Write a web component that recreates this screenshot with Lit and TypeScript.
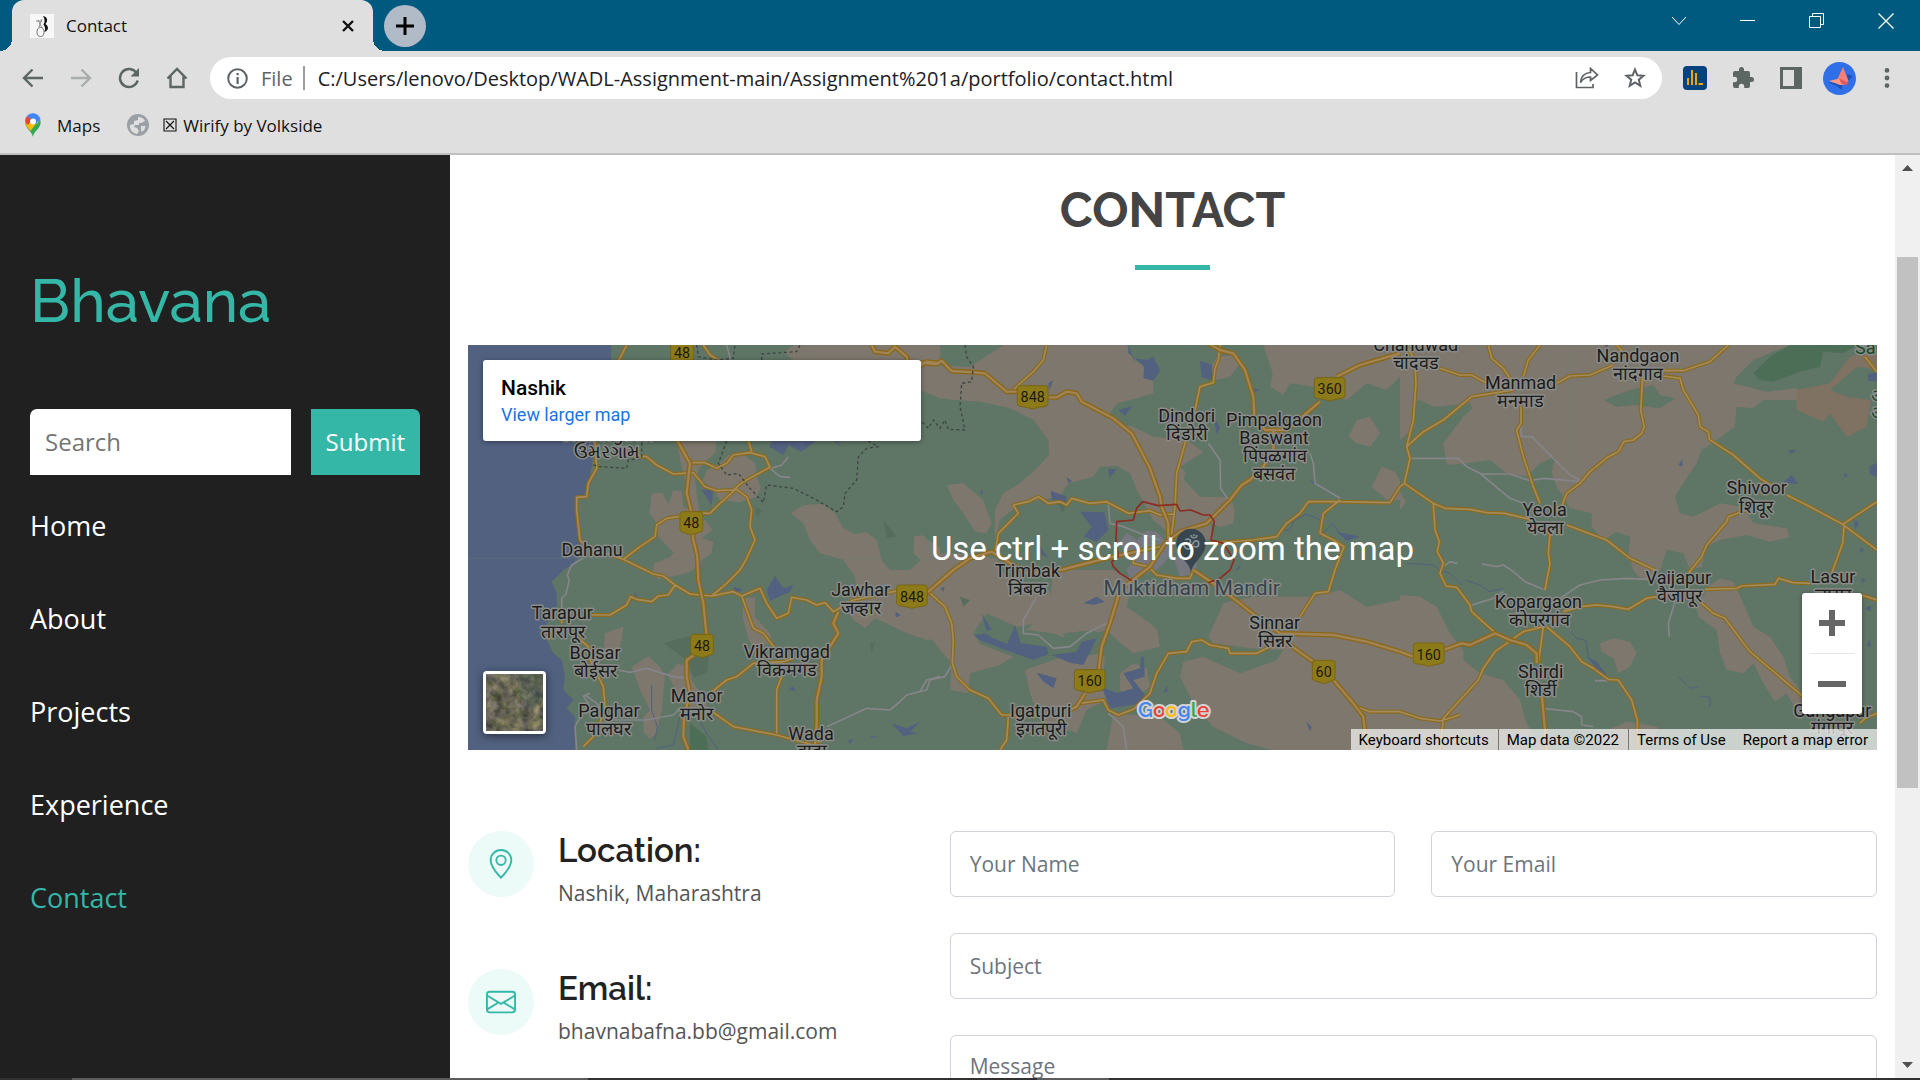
import { LitElement, html, svg, css } from "lit";
import { customElement } from "lit/decorators.js";

/* ---------- Map artwork: three side-by-side tiles, three units to a pixel ---------- */

const TILE_X = [0, 1380, 2820];

const tiles = (name: string, paths: string[]) =>
  paths.map((d, i) => svg`<path class=${name} transform="translate(${TILE_X[i]} 0)" d=${d}></path>`);

const SAND = [
  `M975 40Q990 15 1010 15H1440V180L1420 130L1380 75L1000 60Z
   M650 290H772L765 340L720 380L705 420L718 520H700L660 360Z
   M780 370L805 345L850 342L885 370L890 410L902 440L890 470L840 487L780 480L760 450L728 422L740 390Z
   M575 460L607 458L625 492L640 450L665 455L670 500L700 512L740 545L757 570L725 595L760 605L755 640L725 660L700 690L670 702L595 718L578 700L582 670L630 652L640 638L595 590L590 550L568 520Z
   M992 520L1030 495L1090 492L1125 520L1150 565L1185 582L1220 577L1250 600L1265 660L1290 690L1350 690L1382 660L1360 640L1362 590L1385 585L1440 625V895L1400 900L1340 880L1290 855L1245 835L1215 865L1180 840L1150 790L1190 760L1185 710L1150 660L1080 640L1050 600L1030 550Z
   M435 880L490 860L485 905L465 945L430 950Z
   M515 980L565 948L600 980L615 1010L605 1110L590 1180L570 1197L550 1175V1130L570 1110L540 1050Z
   M850 775L885 770V830L930 880L937 915L870 910L860 880L848 830Z
   M622 1005L655 970L685 980L695 1020L735 1080L745 1105L700 1112L660 1070Z`,
  `M250 15H620L640 60L700 90V160L650 175L590 190L570 220L590 250L640 260L700 290L800 300L868 348L800 380L792 420L840 470L930 472L945 510L940 550L900 562L870 545L880 600L760 590L700 540L650 450L630 400L590 378L540 380L520 410L445 430L420 470L300 490L240 540L225 600V510L250 460L300 430L350 385L387 345L385 300L340 240L270 205L180 185L100 180L60 175L0 150V85L40 75L150 80Z
   M1030 15H1440V110L1400 150L1340 130L1280 180L1180 140L1110 130L1090 165L1050 140L1058 100Z
   M890 50L940 45L957 75L930 110L890 120L870 85Z
   M80 435L130 430L190 480L215 550L200 580L165 575L130 520L100 480Z
   M1385 380L1425 395L1440 420V480L1400 480L1355 440Z
   M1285 290L1310 240L1350 230L1380 280L1350 320L1310 310Z
   M0 600L50 640L120 640L230 655L250 700L330 745L390 752L400 800L350 850L290 860L200 820L160 880L180 912L280 950L240 975L150 1000L145 1060L90 1050L95 970L60 930L30 890L0 880Z
   M400 690L580 690L640 720L620 800L690 850L712 870L720 920L640 940L590 900L560 870L450 900L400 880L320 870L390 800Z
   M315 990L400 960L470 935L520 930L555 950L545 1040L560 1080L500 1110L470 1180L360 1140L330 1060Z
   M580 1120L720 1130L780 1180L790 1230H560Z
   M600 1000L640 970L680 985L690 1040L640 1080L600 1050Z
   M910 790L1000 770L1180 770L1260 750L1340 800L1440 780V1230H1060L980 1210L880 1160L820 1090L780 1010L790 965L850 950L960 1000L1070 960L1090 930L990 925L880 910L865 890Z`,
  `M0 15H1170L1060 60L1010 110L1000 130L1100 155L1190 145L1195 180L1090 180L1060 205L1010 200L1005 260L950 300L905 330L890 370L850 430L825 470L840 520L880 530L960 490L1030 500L1060 550L1160 565L1168 592L1110 605L1040 585L960 600L920 620L905 680L870 690L850 640L800 630L780 690L750 725L720 715L700 690L685 640L690 590L650 575L610 600L575 560V520L510 505L490 470L470 440L455 400L465 350L420 370L380 410L320 400L270 360L200 370L140 375L130 310L190 230L218 205L210 190L100 200L60 180L40 190L45 260L0 300Z
   M0 455L18 485L0 510Z
   M0 765L60 770L110 800L150 880L190 930V960L240 1000L310 1020L360 1080L380 1150L430 1230H0Z
   M600 910L640 895L690 905L710 940L690 980L655 1000L640 955L605 935Z
   M890 800L930 735L960 715L1000 725L1030 790L1060 860L1110 890L1150 950L1170 1010L1200 1050L1250 1120L1200 1130L1160 1060L1125 1085L1090 1030L1060 970L1030 1000L980 990L960 940L950 870L895 830Z
   M600 1180L680 1145L775 1160L750 1230H600Z`,
];

const GREEN = [
  "",
  `M430 880L520 870L560 900L540 940L440 960Z M780 380L830 430L900 450L860 330Z`,
  `M610 180L690 150L760 135L780 165L825 175L780 205L700 195L650 200Z`,
];

const FOREST = [
  `M690 1150L740 1190L745 1230H690Z`,
  "",
  `M1060 100L1110 50L1170 15H1370L1330 40L1270 35L1260 80L1200 95L1120 125L1080 120Z`,
];

const SHADE = [
  `M610 910L680 890L755 900L740 1000L700 1012L680 960Z M885 500L908 512L890 530Z M1270 540L1310 590L1280 595Z M1230 910L1245 905L1235 940Z`,
  `M400 470L440 480L430 520Z M120 770L150 780L130 800Z`,
  ``,
];

const HILLS = [
  "",
  "",
  `M1190 150L1290 130L1350 50L1440 20V90L1371 80L1290 150L1340 170L1412 180L1400 260L1340 290L1290 220L1270 245L1190 210Z`,
];

const WATER = [
  `M725 450L760 448L755 495Z M920 750L945 708L970 745L1000 735L990 755L930 782Z M820 740L848 748L825 765Z
   M1295 1150L1340 1165L1380 1145L1350 1175L1375 1180L1330 1188Z M985 1050L998 1038L1008 1052Z M1306 815L1322 825L1308 832Z
   M935 300H1070L1025 335L985 315L970 345L928 320Z M1115 300L1145 322L1130 300Z M525 755L535 780H522Z
   M1230 1190L1255 1188L1235 1195Z M1165 1200L1180 1198L1170 1212Z`,
  `M625 15L640 55L680 60L700 50L720 90L700 122L670 115L672 80L640 50L625 40Z M840 62L875 75L878 122L845 110Z M595 210L638 198L615 227Z
   M480 515L553 517L565 570L530 605L492 590L515 560Z M392 452L440 470L435 490L396 480Z M565 386L590 388L568 414Z
   M162 885L195 880L220 895L262 912L285 855L302 910L380 920L385 942L340 960L290 942L230 920L180 900Z
   M395 945L470 935L485 905L530 895L490 975L450 968Z M490 790L530 770L555 785L520 794Z M350 998L410 1015L400 1045L370 1025Z
   M610 1000L660 985L663 950H672L674 1010L640 1020L675 1065L655 1092L600 1100L570 1105L545 1040L590 1060L640 1045Z
   M880 230L900 260L890 285Z M1250 575L1320 590L1280 602Z M945 692L965 670L957 688Z M730 1057L742 1035V1055Z
   M1158 1145L1175 1160L1170 1174Z M185 820L215 870L200 872Z M360 620L385 655L365 645Z M385 130L400 120L388 150Z
   M440 412L455 422L446 430Z M180 452L190 455L184 466Z M62 745L74 740L70 755Z M1170 418L1192 432L1180 432Z M1000 145L1020 150L1000 158Z`,
  `M1148 428L1175 405L1195 432Z M835 375L847 358V380Z M1165 330L1190 332L1172 342Z M1403 102L1430 98V124L1405 122Z
   M1408 380L1430 368V412L1410 402Z M1330 408L1338 398L1343 412Z M1362 540L1376 548L1366 572Z M1380 622L1392 630L1382 640Z
   M1395 805L1412 795V815Z M1402 918L1408 895L1413 920Z M1385 712L1397 722L1386 730Z M560 950L590 965L622 1008L590 985Z M612 12L625 15L620 28Z`,
];

const STREAMS = [
  `M575 1035V1110L592 1160L585 1200 M700 1110L740 1180L775 1230 M660 1130L640 1215L590 1225`,
  `M1080 570L1110 570L1120 545L1160 522L1200 540 M1200 590L1235 550L1260 580`,
  `M20 670L100 675L120 690L150 700L185 735 M195 720L240 735L270 755L310 745 M510 875L530 895L558 902L565 950L620 1005 M835 1010L870 1045L895 1040 M898 1068L930 1072V1100`,
];

const LANES = [
  `M370 655L335 675L322 705L328 720L318 762L305 775V815 M475 990L510 997L560 985L640 1010L690 1015
   M375 1065L410 1090L450 1140L560 1140L640 1125L660 1105 M1100 1160L1220 1105L1290 1110L1320 1085L1340 1065L1380 1055L1400 1020L1440 1010
   M350 1230L345 1160L385 1090L370 1068L390 1060 M930 385L960 410L990 412 M935 385L965 375L985 350 M800 15L812 60`,
  `M865 310L900 360L902 445L925 480 M1170 340L1180 370L1185 430L1260 475 M565 490L570 550L610 560L660 580L720 600
   M350 770L310 840V880L355 885L400 925L450 920L500 880L560 850 M0 1055L20 1050L30 1020L75 1010L95 975 M565 1120L610 1160L620 1230`,
  `M35 355H175L200 380L240 400L330 475L370 490 M240 402H330L390 422L430 415L540 425 M363 250V290H395L510 405L540 420
   M130 680L150 665L172 670 M245 672L290 680L310 675L340 695L375 725L435 750 M480 775L540 735L600 720L680 715L740 718
   M215 795L280 775L310 755 M825 785L805 850L808 890 M430 1105L520 1115L545 1130V1155L580 1160 M585 1022H625`,
];

const ROADS = [
  `M500 15L475 65 M405 300L410 385L385 430L380 470L350 472V510L360 600L368 610
   M520 348L560 350L590 375L640 402L700 398L735 440L770 452L820 450L850 425L930 382L915 350L870 338L820 345L800 370L770 385L735 368L690 368
   M865 300L875 335 M690 525L620 535L590 555L585 590L540 620L490 658L440 640
   M490 658L580 702L610 708L645 735L690 762L755 768L820 755L845 768L900 745L920 790L950 835L985 820L995 772L1040 780L1070 795L1095 788L1120 815L1180 780L1300 755L1345 745
   M645 735L625 765L595 768L575 785L530 778L512 770L500 795L450 825L395 825
   M755 768L800 730L840 690L860 655L885 600L870 560L875 510L860 470L828 447L780 490L750 520L700 518
   M845 768L880 865L910 880L945 925 M750 1060L800 1020L830 1010L880 970L970 965L1000 955
   M965 1010L950 1050V1180 M750 1110L820 1160L950 1185L1060 1215L1085 1200
   M350 890L385 920L390 960L430 1040L435 1100L410 1180L370 1220
   M730 15L750 45L775 60 M305 820V850`,
  `M380 15L370 60L340 95L300 130L275 155
   M900 15L895 60L885 85L880 128L840 140L825 210L795 310L770 400L765 500L755 580L740 600
   M225 640L235 580L265 550L295 520L280 495L325 485L355 470L385 490L420 485L440 495L455 475L510 490L560 485L625 520L690 512L720 525L760 522
   M25 755L75 800L95 850L100 900L97 970L110 1010L150 1050L205 1075L245 1125H360 M265 1130L260 1200L240 1230
   M640 650V670L685 680L710 705L770 715H810L820 690
   M870 610L1000 600L1070 590L1100 550L1140 520L1165 485H1260L1410 488L1440 440
   M1260 480L1210 520L1200 580L1240 600L1272 620L1245 690L1225 755L1185 760L1140 830
   M1310 1100L1350 1115H1440
   M480 1090L550 1080L565 1110L595 1125L640 1108L690 1060L710 1000L745 940L800 935L815 905L845 900L870 915L925 925L930 940H1010L1060 915`,
  `M20 320L70 275L130 240L215 170L340 150 M120 85L180 105H215L260 130 M470 130L510 108L570 105L640 75
   M265 15L275 55L310 85L340 130 M420 15L385 60L370 110 M650 15L690 60
   M985 15L930 65L850 92H790 M790 108L840 115L850 150L895 225L900 260L925 275L928 298L1000 345L1080 415L1120 440
   M728 110L722 210L733 260L725 280L700 300L672 305L655 335L625 350L570 395L540 430L500 460L485 500
   M363 200V250L350 270L370 350L400 440L420 490 M20 20L45 60L48 130L40 240L20 320L30 355L13 430L0 440
   M100 490L105 570L118 605L112 635L130 670L120 700L138 738L170 742L210 795L215 815L285 878
   M430 860L370 875L285 935L250 985L235 1020L130 1135L120 1230 M0 1115L60 1135L120 1143L180 1125
   M430 860L415 970 M450 580L445 640L450 670L435 750 M500 555L620 600L690 655L765 690
   M440 860L510 920L545 965L580 985L625 1018L655 1020L695 1080L712 1140V1230
   M490 815L540 800L590 795L640 800L685 808L740 775L770 770
   M915 748L1010 745L1025 738L1125 733L1135 715L1180 728L1230 730 M865 700L905 650L920 615L980 545L985 530L1040 510
   M13 430L100 490L135 505L210 508L260 518L315 520L400 540 M1160 465L1220 495L1328 553L1431 630 M1328 553L1431 485 M1332 560L1328 610L1295 700
   M900 785L940 820L975 835L1050 935L1210 1070 M1380 1150L1395 1135L1431 1120 M1385 765L1431 780 M1395 50L1430 95`,
];

const HIGHWAYS = [
  `M640 280L690 370L680 460L695 520L700 600L712 650L715 720L730 790L740 890L725 930L680 960V1010L690 1060L672 1130L670 1190L685 1230
   M1135 815L1120 850L1135 880L1110 920L1085 960V1010L1070 1080V1150L1065 1215
   M1235 15L1245 35L1285 40L1305 20L1340 50L1345 70L1380 78L1400 65L1440 70`,
  `M0 68L50 72L65 62L95 93L165 97L195 100L260 155H300 M385 172H410L440 155L470 160L485 185L580 235L635 280L690 385L720 470L725 500L745 550V595
   M865 10L900 30L940 40L975 90L1000 170L1003 230L1035 270L1100 270L1200 185 M1250 110L1320 75L1440 40
   M1060 270V330L1030 380L990 420L965 435L930 480L860 550L780 575L735 610L690 680L600 750L570 850L545 920L535 1000 M495 1060L470 1100L450 1110
   M25 755L100 690L150 655L215 635L320 700 M320 700L430 688L480 675L580 650L720 620
   M820 690L880 730L960 790L1010 830L1080 880 M1080 880L1240 885L1340 905L1440 935 M1110 915L1180 965 M1240 1020L1300 1090L1330 1130L1340 1230
   M0 790L25 755`,
  `M0 935L40 950 M130 930L185 910L210 915L285 880L330 900L380 915L410 940V970 M425 1060L435 1170L440 1230`,
];

const BORDERS = [
  `M400 375L420 380L500 385L505 360L545 355V305 M800 303L775 370L800 405L835 400L870 445L910 488L920 435L1000 445L1060 475L1130 515L1150 500L1155 460L1190 420L1195 350L1220 325L1255 320L1225 303
   M710 15L715 50L770 60L820 55L825 15 M905 60V42L1010 35L1020 15`,
  `M135 15L140 50L160 80L155 125L125 130L120 200L135 270L85 268L75 240L60 265L40 240L25 265L0 240`,
  "",
];

const LABELS: [number, number, string, string?][] = [
  [440, 302, "Umbergaon"], [440, 354, "ઉમરગામ"],
  [396, 647, "Dahanu"], [307, 838, "Tarapur"], [310, 893, "तारापूर"], [405, 957, "Boisar"], [405, 1010, "बोईसर"],
  [447, 1130, "Palghar"], [446, 1184, "पालघर"], [710, 1087, "Manor"], [710, 1140, "मनोर"],
  [980, 955, "Vikramgad"], [982, 1008, "विक्रमगड"], [1202, 768, "Jawhar"], [1203, 822, "जव्हार"],
  [1053, 1200, "Wada"], [1055, 1252, "वाडा"],
  [1702, 710, "Trimbak"], [1702, 766, "त्रिंबक"], [2180, 247, "Dindori"], [2180, 300, "दिंडोरी"],
  [2442, 258, "Pimpalgaon"], [2442, 312, "Baswant"], [2444, 366, "पिंपळगांव"], [2442, 421, "बसवंत"],
  [2444, 868, "Sinnar"], [2444, 921, "सिन्नर"], [1742, 1132, "Igatpuri"], [1744, 1186, "इगतपूरी"],
  [2867, 34, "Chandwad"], [2867, 87, "चांदवड"], [3182, 148, "Manmad"], [3182, 201, "मनमाड"],
  [3534, 67, "Nandgaon"], [3535, 121, "नांदगाव"], [3254, 528, "Yeola"], [3255, 581, "येवला"],
  [3890, 463, "Shivoor"], [3889, 519, "शिवूर"], [3655, 731, "Vaijapur"], [3657, 785, "वैजापूर"],
  [3235, 804, "Kopargaon"], [3239, 858, "कोपरगांव"], [3242, 1013, "Shirdi"], [3242, 1067, "शिर्डी"],
  [4119, 729, "Lasur"], [4119, 783, "लासूर"], [4117, 1131, "Gangapur"], [4117, 1183, "गंगापूर"],
  [4216, 42, "Sa", "park"], [4254, 187, "अ", "park"], [4254, 236, "अ", "park"],
  [2195, 764, "Muktidham Mandir", "poi"],
];

const SHIELDS: [number, number, string][] = [
  [666, 38, "48"], [694, 550, "48"], [726, 918, "48"], [1356, 770, "848"], [1718, 172, "848"],
  [2609, 148, "360"], [1889, 1024, "160"], [2591, 996, "60"], [2906, 944, "160"],
];

const shield = ([x, y, n]: [number, number, string]) => {
  const w = n.length > 2 ? 46 : 34;
  return svg`<g transform="translate(${x} ${y})">
    <path class="shield" d="M${-w + 8} -35H${w - 8}Q${w} -35 ${w} -27V18Q${w} 25 ${w - 9} 27Q14 30 0 35Q-14 30 ${-w + 9} 27Q${-w} 25 ${-w} 18V-27Q${-w} -35 ${-w + 8} -35Z"></path>
    <text class="num" y="15">${n}</text></g>`;
};

@customElement("region-map")
class RegionMap extends LitElement {
  static styles = css`
    :host { display: block; position: relative; height: 405px; overflow: hidden; background: #5f7566; font-family: Roboto, "Liberation Sans", sans-serif; }
    .art { display: block; width: 100%; height: 100%; }
    .sea, .water { fill: #51617f; }
    .sand { fill: #7d776d; }
    .green { fill: #5f7566; }
    .forest { fill: #4d6e56; }
    .shade { fill: #566d5e; }
    .hills { fill: #7f7262; }
    .city { fill: #777780; }
    .stream, .lane, .case, .line, .hcase, .hline, .border, .limit { fill: none; stroke-linejoin: round; }
    .stream { stroke: #51617f; stroke-width: 3; }
    .lane { stroke: #85858a; stroke-width: 5; }
    .case { stroke: #8c6a1c; stroke-width: 12; }
    .line { stroke: #a28b5c; stroke-width: 5; }
    .hcase { stroke: #8c6717; stroke-width: 15; }
    .hline { stroke: #a08455; stroke-width: 7; }
    .border { stroke: #3e4644; stroke-width: 4; stroke-dasharray: 9 8; }
    .limit { stroke: #8c2c23; stroke-width: 5; }
    .grid { stroke: #6c7f78; stroke-width: 2; opacity: 0.5; }
    .label { font-size: 54px; text-anchor: middle; fill: #1b1b1b; stroke: #8a8c88; stroke-width: 9; stroke-linejoin: round; paint-order: stroke; }
    .poi { font-size: 63px; fill: #36434d; }
    .park { fill: #174a2a; }
    .shield { fill: #8d7a18; stroke: #7a6611; stroke-width: 3; }
    .num { font-size: 43px; text-anchor: middle; fill: #1c1a10; }
    .pin { fill: #37464f; }
    .om { font-size: 60px; text-anchor: middle; fill: #8b969b; }
    .logo { font: 600 62px Raleway, Lato, sans-serif; text-anchor: middle; stroke: #d3d3d3; stroke-width: 12; stroke-linejoin: round; paint-order: stroke; }
    .b { fill: #4285f4; } .r { fill: #ea4335; } .y { fill: #fbbc05; } .g { fill: #34a853; }
    .hint { position: absolute; inset: 0; display: flex; align-items: center; justify-content: center; margin: 0; padding-top: 2px; font-size: 33px; line-height: 40px; color: #fff; text-align: center; }
    .place { position: absolute; top: 15px; left: 15px; width: 438px; height: 81px; box-sizing: border-box; padding: 15px 18px; background: #fff; border-radius: 3px; box-shadow: 0 1px 5px rgba(0, 0, 0, 0.4); }
    .name { font-size: 21px; line-height: 27px; font-weight: 500; color: #000; }
    .more { display: block; font-size: 18px; line-height: 25px; color: #1a73e8; text-decoration: none; }
    .sat { position: absolute; left: 15px; bottom: 16px; width: 63px; height: 63px; padding: 0; border: 3px solid #fff; border-radius: 4px; overflow: hidden; background: #6a6a54; box-shadow: 0 2px 8px rgba(0, 0, 0, 0.5); }
    .sat svg { display: block; width: 57px; height: 57px; }
    .zoom { position: absolute; right: 15px; bottom: 36px; width: 60px; height: 121px; background: #fff; border-radius: 3px; display: flex; flex-direction: column; align-items: center; box-shadow: 0 1px 4px rgba(0, 0, 0, 0.4); }
    .zoom button { flex: 1; width: 60px; padding: 0; border: 0; background: none; }
    .zoom svg { display: block; margin: auto; }
    .rule { width: 45px; height: 1px; background: #e6e6e6; }
    .credits { position: absolute; right: 0; bottom: 0; display: flex; height: 21px; font-size: 15px; line-height: 22px; color: #000; }
    .credits > * { padding: 0 9px 0 8px; background: rgba(245, 245, 245, 0.72); color: #000; text-decoration: none; border: 0; font: inherit; white-space: nowrap; }
    .keys, .data { margin-right: 1px; }
  `;

  render() {
    return html`
      <svg class="art" viewBox="24 15 4227 1215" preserveAspectRatio="xMidYMid slice" role="img" aria-label="Map of Nashik">
        <path class="sea" d="M-1000 -500H453V60L420 200L405 300L395 380L380 460L345 480L350 560L368 640L335 675L310 690L275 725L290 760V800L265 840L250 880L280 940L305 960L315 1010L310 1050L340 1080L320 1105L345 1130V1180L355 1800H-1000Z"></path>
        ${tiles("sand", SAND)} ${tiles("green", GREEN)} ${tiles("forest", FOREST)} ${tiles("shade", SHADE)} ${tiles("hills", HILLS)}
        <path class="city" d="M1975 610L2000 578L2030 600L2060 572L2090 575L2120 605L2130 650L2090 690L2010 715L2000 690L2020 660Z M2140 650H2210V700L2160 710Z"></path>
        ${tiles("water", WATER)} ${tiles("stream", STREAMS)} ${tiles("lane", LANES)}
        <path class="grid" d="M24 656H4251M1028 15V1230M2180 15V1230M3332 15V1230"></path>
        ${tiles("case", ROADS)} ${tiles("line", ROADS)} ${tiles("hcase", HIGHWAYS)} ${tiles("hline", HIGHWAYS)}
        ${tiles("border", BORDERS)}
        <path class="limit" transform="translate(1380 0)" d="M635 722L600 700L580 680L575 665L595 650L588 600L590 545L640 540L650 505L668 485L715 497L770 493L780 513L812 510L850 525L870 525L883 545L873 600L910 610L942 660L930 690L900 715L865 728"></path>
        <path class="pin" d="M2193 698C2190 665 2149 650 2149 610A44 44 0 0 1 2237 610C2237 650 2197 665 2193 698Z"></path>
        <text class="om" x="2193" y="634">ॐ</text>
        ${LABELS.map(([x, y, t, k]) => svg`<text class="label ${k ?? ""}" x=${x} y=${y}>${t}</text>`)}
        ${SHIELDS.map(shield)}
        <text class="logo" x="2141" y="1131"><tspan class="b">G</tspan><tspan class="r">o</tspan><tspan class="y">o</tspan><tspan class="b">g</tspan><tspan class="g">l</tspan><tspan class="r">e</tspan></text>
      </svg>
      <p class="hint">Use ctrl + scroll to zoom the map</p>
      <div class="place">
        <div class="name">Nashik</div>
        <a class="more" href="#map">View larger map</a>
      </div>
      <button class="sat" aria-label="Show satellite imagery">
        <svg viewBox="0 0 57 57">
          <filter id="terrain" x="0" y="0" width="1" height="1" color-interpolation-filters="sRGB">
            <feTurbulence type="fractalNoise" baseFrequency="0.11" numOctaves="4" seed="7"></feTurbulence>
            <feColorMatrix values="0.5 0.3 0 0 0.01  0.4 0.3 0 0 0.05  0.4 0.1 0.1 0 0.03  0 0 0 0 1"></feColorMatrix>
          </filter>
          <rect width="57" height="57" fill="#696753"></rect>
          <rect width="57" height="57" filter="url(#terrain)"></rect>
          <path fill="#3f5a50" opacity="0.3" d="M30 0H57V28L44 36L34 24Z"></path>
        </svg>
      </button>
      <div class="zoom">
        <button aria-label="Zoom in"><svg width="28" height="28"><path fill="#666" d="M11 1h6v10h10v6H17v10h-6V17H1v-6h10z"></path></svg></button>
        <div class="rule"></div>
        <button aria-label="Zoom out"><svg width="28" height="28"><path fill="#666" d="M0 11h28v6H0z"></path></svg></button>
      </div>
      <div class="credits">
        <button class="keys">Keyboard shortcuts</button><span class="data">Map data ©2022</span><a href="#terms">Terms of Use</a><a href="#report">Report a map error</a>
      </div>
    `;
  }
}

@customElement("browser-chrome")
class BrowserChrome extends LitElement {
  static styles = css`
    :host { display: block; background: #dfdfdf; border-bottom: 2px solid #bfbfbf; font-family: "Open Sans", "Noto Sans", sans-serif; color: #111; }
    button { padding: 0; border: 0; background: none; display: flex; align-items: center; justify-content: center; }
    svg { display: block; }
    .tabs { display: flex; height: 51px; background: #005a80; padding-left: 12px; }
    .tab { position: relative; display: flex; align-items: center; width: 361px; box-sizing: border-box; padding: 0 13px 0 18px; background: #dfdfdf; border-radius: 12px 12px 0 0; font-size: 17px; }
    .tab::before, .tab::after { content: ""; position: absolute; bottom: 0; width: 12px; height: 12px; }
    .tab::before { right: 100%; background: radial-gradient(circle at 0 0, transparent 12px, #dfdfdf 12px); }
    .tab::after { left: 100%; background: radial-gradient(circle at 100% 0, transparent 12px, #dfdfdf 12px); }
    .title { flex: 1; margin-left: 12px; }
    .close { width: 24px; height: 24px; }
    .plus { align-self: center; width: 42px; height: 42px; margin-left: 11px; border-radius: 50%; background: #b0bbc7; }
    .window { display: flex; margin-left: auto; height: 42px; }
    .window button { width: 69px; }
    .bar { display: flex; align-items: center; height: 54px; padding: 0 9px; }
    .bar button { width: 48px; height: 42px; }
    .omni { flex: 1; display: flex; align-items: center; height: 42px; margin: 0 9px; padding: 0 3px 0 17px; border-radius: 21px; background: #fff; font-size: 20px; color: #5f6368; }
    .file { margin-left: 13px; }
    .sep { width: 2px; height: 24px; margin: 0 13px 0 10px; background: #9a9da1; }
    .url { flex: 1; min-width: 0; border: 0; padding: 0; outline: 0; background: none; font: inherit; color: #202124; }
    .marks { display: flex; align-items: center; height: 48px; padding: 0 23px 8px; box-sizing: border-box; font-size: 17px; }
    .marks a { display: flex; align-items: center; color: #111; text-decoration: none; margin-right: 27px; }
    .icon { margin-right: 14px; }
    .box { margin-right: 6px; }
  `;

  render() {
    return html`
      <div class="tabs">
        <div class="tab">
          <svg width="24" height="24" viewBox="0 0 24 24"><rect width="24" height="24" fill="#f7f7f7"></rect><path d="M13 2C18 3 18 7 15.500 10C19 12 19 17 14 18C16 15 15 13 13.500 10.500C15 8 15 5 13 2Z" fill="#111"></path><ellipse cx="10.500" cy="18" rx="3.500" ry="4.500" fill="none" stroke="#777"></ellipse><path d="M6 7H12M8 6L12 14M12 5L9 13" stroke="#888" fill="none"></path></svg>
          <span class="title">Contact</span>
          <button class="close" aria-label="Close tab"><svg width="14" height="14" viewBox="0 0 14 14"><path d="M2 2L12 12M12 2L2 12" stroke="#111" stroke-width="2.400"></path></svg></button>
        </div>
        <button class="plus" aria-label="New tab"><svg width="18" height="18" viewBox="0 0 18 18"><path d="M9 0V18M0 9H18" stroke="#000" stroke-width="3"></path></svg></button>
        <div class="window">
          <button aria-label="Search tabs"><svg width="16" height="10" viewBox="0 0 16 10"><path d="M1 1L8 8.500L15 1" fill="none" stroke="#fff"></path></svg></button>
          <button aria-label="Minimize"><svg width="16" height="2"><path fill="#fff" d="M0 0h15v1H0z"></path></svg></button>
          <button aria-label="Restore"><svg width="16" height="16" viewBox="0 0 16 16"><path d="M.5 3.500H11.500V14.500H.5ZM3.500 3.500V.5H14.500V11.500H11.500" fill="none" stroke="#fff"></path></svg></button>
          <button aria-label="Close"><svg width="16" height="16" viewBox="0 0 16 16"><path d="M.5 .5L15.500 15.500M15.500 .5L.5 15.500" stroke="#fff" stroke-width="1.300"></path></svg></button>
        </div>
      </div>
      <div class="bar">
        <button aria-label="Back"><svg width="22" height="20" viewBox="0 0 22 20"><path d="M21 10H2.500M10.500 1.500L2 10L10.500 18.500" fill="none" stroke="#5c6663" stroke-width="2.400"></path></svg></button>
        <button aria-label="Forward"><svg width="22" height="20" viewBox="0 0 22 20"><path d="M1 10H19.500M11.500 1.500L20 10L11.500 18.500" fill="none" stroke="#a9adab" stroke-width="2.400"></path></svg></button>
        <button aria-label="Reload"><svg width="22" height="22" viewBox="0 0 22 22"><path d="M18.500 6A9 9 0 1 0 19.700 13.500" fill="none" stroke="#5c6663" stroke-width="2.500"></path><path fill="#5c6663" d="M21 1V9.500H12.500Z"></path></svg></button>
        <button aria-label="Home"><svg width="22" height="22" viewBox="0 0 22 22"><path d="M1.500 11.500L11 2L20.500 11.500M4.500 9V20H17.500V9" fill="none" stroke="#5c6663" stroke-width="2.400"></path></svg></button>
        <div class="omni">
          <svg width="21" height="21" viewBox="0 0 21 21"><circle cx="10.500" cy="10.500" r="9.300" fill="none" stroke="#5f6368" stroke-width="2"></circle><path fill="#5f6368" d="M9.500 5h2.200v2.200H9.500zM9.500 9h2.200v7H9.500z"></path></svg>
          <span class="file">File</span><span class="sep"></span>
          <input class="url" aria-label="Address" value="C:/Users/lenovo/Desktop/WADL-Assignment-main/Assignment%201a/portfolio/contact.html">
          <button aria-label="Share"><svg width="24" height="22" viewBox="0 0 24 22"><path d="M1.500 5V20.500H18V17M5.500 15.500C6 9 10 6 15.500 5.500V1.500L22.500 8L15.500 13.500V10C11.500 10 8 11.500 5.500 15.500Z" fill="none" stroke="#5f6368" stroke-width="1.700"></path></svg></button>
          <button aria-label="Bookmark this page"><svg width="22" height="22" viewBox="0 0 22 22"><path d="M11 2.500L13.300 8.200L19.500 8.700L14.800 12.700L16.300 18.800L11 15.500L5.700 18.800L7.200 12.700L2.500 8.700L8.700 8.200Z" fill="none" stroke="#5f6368" stroke-width="2"></path></svg></button>
        </div>
        <button aria-label="Analytics extension"><svg width="24" height="24" viewBox="0 0 24 24"><rect width="24" height="24" rx="4" fill="#05427e"></rect><path fill="#f5a10a" d="M4 12h2v7H4zM8 4h2v15H8zM12 7h2v12H12zM15.500 17H20v2h-4.500z"></path></svg></button>
        <button aria-label="Extensions"><svg width="24" height="24" viewBox="0 0 24 24"><path fill="#5c6663" d="M20.500 11H19V7a2 2 0 0 0-2-2h-4V3.500a2.500 2.500 0 0 0-5 0V5H4a2 2 0 0 0-2 2v3.800h1.500a2.700 2.700 0 0 1 0 5.400H2V20a2 2 0 0 0 2 2h3.800v-1.500a2.700 2.700 0 0 1 5.400 0V22H17a2 2 0 0 0 2-2v-4h1.500a2.500 2.500 0 0 0 0-5z"></path></svg></button>
        <button aria-label="Side panel"><svg width="22" height="22" viewBox="0 0 22 22"><path fill="#5c6663" fill-rule="evenodd" d="M0 0h22v22H0zM3 3v16h11V3z"></path></svg></button>
        <button aria-label="Profile"><svg width="33" height="33" viewBox="0 0 33 33"><circle cx="16.500" cy="16.500" r="16.500" fill="#2f6fe8"></circle><path fill="#1f4fb8" d="M4 20L14 21L19 23L19 28L14 24Z M24 12L30 14L25 19Z"></path><path fill="#f87f77" d="M20 5L14.500 17L22 22L25.500 19Z"></path><path fill="#ff9a86" d="M6 19L16 16.500L24 22L17 23Z"></path><path fill="#e05a5f" d="M16 16.500L26 21L22 23.500L18 21Z"></path></svg></button>
        <button aria-label="Menu"><svg width="6" height="22" viewBox="0 0 6 22"><path fill="#5c6663" d="M3 1a2.400 2.400 0 1 1 0 4.800a2.400 2.400 0 1 1 0-4.800zM3 8.600a2.400 2.400 0 1 1 0 4.800a2.400 2.400 0 1 1 0-4.800zM3 16.200a2.400 2.400 0 1 1 0 4.800a2.400 2.400 0 1 1 0-4.800z"></path></svg></button>
      </div>
      <nav class="marks" aria-label="Bookmarks">
        <a href="#maps"><svg class="icon" width="20" height="24" viewBox="0 0 20 24"><path fill="#34a853" d="M10 24C9 18 2 16 2 8.500L5 5L14 11L17 6C20 15 11 17 10 24Z"></path><path fill="#fbbc05" d="M7.500 18C5 14.500 2 12.500 2 8L8 6.500L12.500 11.500Z"></path><path fill="#ea4335" d="M4 3L9 7L5 12C3 11 .5 7 4 3Z"></path><path fill="#4285f4" d="M4 3C8 -2 16 0 17.500 6L13 11L8 6.500Z"></path><circle cx="10" cy="8.500" r="3" fill="#fff"></circle></svg>Maps</a>
        <a href="#wirify"><svg class="icon" width="22" height="22" viewBox="0 0 22 22"><circle cx="11" cy="11" r="11" fill="#9aa0a6"></circle><path fill="#dfdfdf" d="M11 3C14 3 17 4.500 18 7L14 9H12V11H8L7 13L10 14L12 17L10 20C5 19 2.500 15 3 11L7 10V7L11 6ZM14 12L18.500 12C18 15 17 17 14.500 18L14 15Z"></path></svg><svg class="box" width="14" height="14" viewBox="0 0 14 14"><path d="M1 1H13V13H1ZM3 3L11 11M11 3L3 11" fill="none" stroke="#111" stroke-width="1.100"></path></svg>Wirify by Volkside</a>
      </nav>
    `;
  }
}

const LINKS = ["Home", "About", "Projects", "Experience", "Contact"];

@customElement("app-root")
class AppRoot extends LitElement {
  static styles = css`
    :host { display: flex; flex-direction: column; height: 100vh; overflow: hidden; background: #fff; font-family: "Open Sans", "Noto Sans", sans-serif; color: #444; }
    .page { flex: 1; min-height: 0; display: flex; }
    .side { width: 450px; flex: none; box-sizing: border-box; padding: 110px 30px 0; background: #202020; overflow: hidden; }
    .brand { margin: 0 0 72px; font: 500 60px/72px Raleway, Lato, sans-serif; color: #34b7a7; }
    .search { display: flex; gap: 20px; height: 66px; margin-bottom: 4px; }
    .query { flex: 1; min-width: 0; box-sizing: border-box; border: 0; padding: 0 15px 2px; border-radius: 7px 0 0 0; background: #fff; font: 24px "Open Sans", sans-serif; }
    .query::placeholder { color: #757575; opacity: 1; }
    .go { flex: none; border: 0; padding: 0 15px 2px; border-radius: 0 7px 0 0; background: #34b7a7; color: #fff; font: 24px "Open Sans", sans-serif; }
    .nav { list-style: none; margin: 0; padding: 0; }
    .nav a { display: flex; align-items: center; height: 93px; font-size: 27px; line-height: 36px; color: #fff; text-decoration: none; }
    .nav a.on { color: #34b7a7; }
    .main { flex: 1; min-width: 0; overflow: hidden; padding: 26px 18px 0; }
    .head { margin: 0 0 75px; text-align: center; }
    .head h2 { margin: 0; font: 700 48px/58px Raleway, Lato, sans-serif; color: #444; text-transform: uppercase; }
    .head::after { content: ""; display: block; width: 75px; height: 5px; margin: 26px auto 0; background: #34b7a7; }
    .grid { display: grid; grid-template-columns: repeat(3, minmax(0, 1fr)); gap: 36px; margin-top: 81px; }
    .info { display: flex; flex-direction: column; gap: 60px; }
    .item { display: flex; gap: 24px; height: 78px; }
    .dot { flex: none; width: 66px; height: 66px; border-radius: 50%; background: #ecfaf8; display: flex; align-items: center; justify-content: center; }
    .item h4 { margin: 0; font: 600 33px/40px Raleway, Lato, sans-serif; color: #222; }
    .item p { margin: 7px 0 0; font-size: 21px; line-height: 30px; color: #555; }
    .form { grid-column: span 2; display: grid; grid-template-columns: 1fr 1fr; gap: 36px; align-content: start; }
    .field { box-sizing: border-box; width: 100%; height: 66px; padding: 0 19px; border: 1px solid #ced4da; border-radius: 6px; background: #fff; font: 21px "Open Sans", sans-serif; color: #444; }
    .field::placeholder { color: #6c757d; opacity: 1; }
    .wide { grid-column: span 2; }
    .area { display: block; height: 300px; padding: 15px 19px; line-height: 30px; resize: none; }
    .scroll { flex: none; width: 25px; background: #f0f0f0; display: flex; flex-direction: column; align-items: center; padding: 10px 0; box-sizing: border-box; }
    .track { flex: 1; width: 21px; box-sizing: border-box; padding: 86px 0 0; }
    .thumb { height: 66%; background: #c1c1c1; }
    .task { flex: none; height: 2px; display: flex; background: #313131; }
    .task i { width: 516px; margin-left: 72px; background: #5c5c5c; }
    .task i + i { width: 72px; margin-left: 449px; }
  `;

  render() {
    return html`
      <browser-chrome></browser-chrome>
      <div class="page">
        <aside class="side">
          <h1 class="brand">Bhavana</h1>
          <form class="search">
            <input class="query" type="search" aria-label="Search" placeholder="Search">
            <button class="go" type="button">Submit</button>
          </form>
          <nav><ul class="nav">
            ${LINKS.map((l) => html`<li><a class=${l === "Contact" ? "on" : ""} href="#${l.toLowerCase()}">${l}</a></li>`)}
          </ul></nav>
        </aside>
        <main class="main">
          <header class="head"><h2>Contact</h2></header>
          <region-map></region-map>
          <section class="grid">
            <div class="info">
              <div class="item">
                <span class="dot"><svg width="30" height="30" viewBox="0 0 16 16" fill="#34b7a7"><path d="M12.166 8.940c-.524 1.062-1.234 2.120-1.960 3.070A31.493 31.493 0 0 1 8 14.580a31.481 31.481 0 0 1-2.206-2.570c-.726-.950-1.436-2.008-1.960-3.070C3.304 7.867 3 6.862 3 6a5 5 0 0 1 10 0c0 .862-.305 1.867-.834 2.940zM8 16s6-5.686 6-10A6 6 0 0 0 2 6c0 4.314 6 10 6 10z"></path><path d="M8 8a2 2 0 1 1 0-4 2 2 0 0 1 0 4zm0 1a3 3 0 1 0 0-6 3 3 0 0 0 0 6z"></path></svg></span>
                <div><h4>Location:</h4><p>Nashik, Maharashtra</p></div>
              </div>
              <div class="item">
                <span class="dot"><svg width="30" height="30" viewBox="0 0 16 16" fill="#34b7a7"><path d="M0 4a2 2 0 0 1 2-2h12a2 2 0 0 1 2 2v8a2 2 0 0 1-2 2H2a2 2 0 0 1-2-2V4zm2-1a1 1 0 0 0-1 1v.217l7 4.200 7-4.200V4a1 1 0 0 0-1-1H2zm13 2.383-4.758 2.855L15 11.114v-5.730zm-.034 6.878L9.271 8.820 8 9.583 6.728 8.820l-5.694 3.440A1 1 0 0 0 2 13h12a1 1 0 0 0 .966-.739zM1 11.114l4.758-2.876L1 5.383v5.730z"></path></svg></span>
                <div><h4>Email:</h4><p>bhavnabafna.bb@gmail.com</p></div>
              </div>
            </div>
            <form class="form">
              <input class="field" type="text" aria-label="Your Name" placeholder="Your Name">
              <input class="field" type="email" aria-label="Your Email" placeholder="Your Email">
              <input class="field wide" type="text" aria-label="Subject" placeholder="Subject">
              <textarea class="field wide area" aria-label="Message" placeholder="Message"></textarea>
            </form>
          </section>
        </main>
        <div class="scroll" aria-hidden="true">
          <svg width="11" height="6"><path fill="#505050" d="M0 6L5.500 0L11 6z"></path></svg>
          <div class="track"><div class="thumb"></div></div>
          <svg width="11" height="6"><path fill="#505050" d="M0 0L5.500 6L11 0z"></path></svg>
        </div>
      </div>
      <div class="task"><i></i><i></i></div>
    `;
  }
}
